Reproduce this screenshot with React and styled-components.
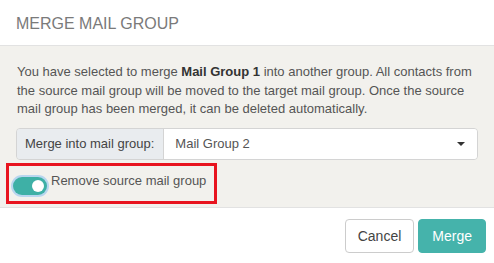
import React, { useState } from 'react';
import styled, { createGlobalStyle } from 'styled-components';

const GlobalStyle = createGlobalStyle`
  html, body {
    margin: 0;
    padding: 0;
    background: #fff;
  }
  body {
    font-family: 'Liberation Sans', Arial, sans-serif;
    font-size: 13px;
    color: #555;
  }
`;

const MergeMailGroup = () => {
  const [removeSource, setRemoveSource] = useState(true);

  return (
    <Dialog>
      <Header>
        <h4>MERGE MAIL GROUP</h4>
      </Header>
      <Body>
        <p>
          You have selected to merge <strong>Mail Group 1</strong> into another group. All contacts from
          the source mail group will be moved to the target mail group. Once the source
          mail group has been merged, it can be deleted automatically.
        </p>
        <InputGroup>
          <Addon>Merge into mail group:</Addon>
          <Select>
            <span>Mail Group 2</span>
            <Caret />
          </Select>
        </InputGroup>
        <Highlight>
          <Toggle on={removeSource} onClick={() => setRemoveSource(!removeSource)}>
            <Knob on={removeSource} />
          </Toggle>
          <ToggleLabel>Remove source mail group</ToggleLabel>
        </Highlight>
      </Body>
      <Footer>
        <Button>Cancel</Button>
        <Button primary>Merge</Button>
      </Footer>
    </Dialog>
  );
};

export default function App() {
  return (
    <>
      <GlobalStyle />
      <MergeMailGroup />
    </>
  );
}

const Dialog = styled.div`
  width: 494px;
  height: 263px;
  display: flex;
  flex-direction: column;
  background: #fff;
`;

const Header = styled.div`
  height: 45px;
  padding: 0 16px;
  display: flex;
  align-items: center;
  border-bottom: 1px solid #e2e2e2;

  h4 {
    margin: 2px 0 0;
    font-size: 16px;
    font-weight: 400;
    color: #7a7a7a;
  }
`;

const Body = styled.div`
  background: #f2f1ed;
  padding: 17px 16px 5px 17px;
  height: 162px;
  box-sizing: border-box;
  border-bottom: 1px solid #e2e2e2;

  p {
    margin: 0 0 9px;
    line-height: 18.5px;
    color: #555;
  }

  strong {
    color: #333;
  }
`;

const InputGroup = styled.div`
  display: flex;
  height: 32px;
  margin-left: -1px;
  border: 1px solid #d4d4d4;
  border-radius: 4px;
  box-sizing: border-box;
  overflow: hidden;
`;

const Addon = styled.div`
  display: flex;
  align-items: center;
  padding: 0 9px 0 8px;
  background: #e9ecef;
  border-right: 1px solid #d4d4d4;
  color: #444;
  white-space: nowrap;
`;

const Select = styled.div`
  flex: 1;
  display: flex;
  align-items: center;
  justify-content: space-between;
  padding: 0 12px 0 11px;
  background: #fff;
  color: #555;
`;

const Caret = styled.span`
  width: 0;
  height: 0;
  border-left: 4px solid transparent;
  border-right: 4px solid transparent;
  border-top: 4px solid #333;
`;

const Highlight = styled.div`
  display: inline-flex;
  align-items: flex-start;
  margin: 3px 0 0 -11px;
  width: 211px;
  height: 41px;
  box-sizing: border-box;
  border: 3px solid #e8141f;
  padding: 7px 0 0 4px;
`;

const Toggle = styled.div`
  position: relative;
  width: 34px;
  height: 18px;
  margin-top: 4px;
  border-radius: 9px;
  background: ${p => (p.on ? '#3eb0a6' : '#ccc')};
  box-shadow: 0 0 0 2px #b8d6ef;
  cursor: pointer;
  flex-shrink: 0;
`;

const Knob = styled.div`
  position: absolute;
  top: 3px;
  left: ${p => (p.on ? '19px' : '3px')};
  width: 12px;
  height: 12px;
  border-radius: 50%;
  background: #fff;
`;

const ToggleLabel = styled.span`
  margin-left: 4px;
  color: #555;
  line-height: 16px;
`;

const Footer = styled.div`
  flex: 1;
  display: flex;
  justify-content: flex-end;
  align-items: center;
  gap: 4px;
  padding: 0 8px 0 0;
`;

const Button = styled.button`
  height: 34px;
  padding: 0 ${p => (p.primary ? '13px' : '12px')};
  font-family: inherit;
  font-size: 14px;
  border-radius: 4px;
  border: 1px solid ${p => (p.primary ? '#45b3ab' : '#ccc')};
  background: ${p => (p.primary ? '#45b3ab' : '#fff')};
  color: ${p => (p.primary ? '#fff' : '#444')};
  cursor: pointer;
`;
